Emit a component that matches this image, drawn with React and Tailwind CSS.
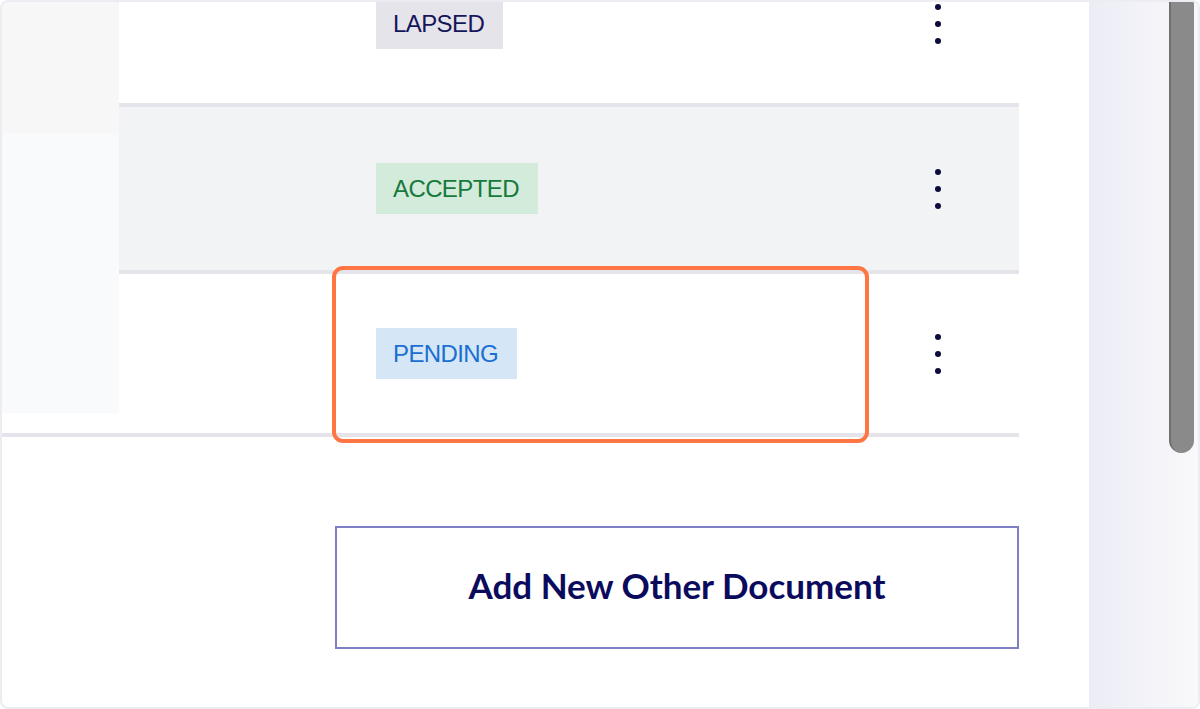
const rows = [
  { label: 'LAPSED', badge: 'bg-[#e4e4ea] text-[#15155a]', h: 'h-[163px]' },
  { label: 'ACCEPTED', badge: 'bg-[#d3ebdb] text-[#17793b]', h: 'h-[167px]' },
  { label: 'PENDING', badge: 'bg-[#d5e6f7] text-[#1a6fd2]', h: 'h-[159px]' },
];

const Kebab = () => (
  <div className="flex flex-col items-center gap-[11px]">
    <span className="w-[6px] h-[6px] rounded-full bg-[#0b0b3d]" />
    <span className="w-[6px] h-[6px] rounded-full bg-[#0b0b3d]" />
    <span className="w-[6px] h-[6px] rounded-full bg-[#0b0b3d]" />
  </div>
);

const Row = ({ label, badge, h, shaded, last }) => (
  <div
    className={`${h} flex items-center justify-between pl-[257px] pr-[78px] ${
      shaded ? 'bg-[#f2f3f5]' : 'bg-white'
    } ${last ? '' : 'border-b-4 border-[#e4e4ea]'}`}
  >
    <span
      className={`h-[51px] pl-[17px] pr-[19px] flex items-center text-[24px] tracking-[-0.6px] font-['Liberation_Sans',sans-serif] ${badge}`}
    >
      {label}
    </span>
    <Kebab />
  </div>
);

const App = () => {
  return (
    <div className="w-[1200px] h-[709px] bg-white overflow-hidden">
      <div className="relative w-full h-full border-2 border-[#ececf2] rounded-[8px] overflow-hidden flex">
        {/* Table + action */}
        <div className="flex-1 flex flex-col">
          <div className="w-[1017px] flex flex-col">
            <div className="flex">
              {/* sticky first column */}
              <div className="w-[117px] flex flex-col">
                <div className="h-[131px] bg-[#f7f7f8]" />
                <div className="h-[280px] bg-[#f9fafb]" />
                <div className="flex-1 bg-white" />
              </div>
              <div className="flex-1 flex flex-col -mt-[58px]">
                {rows.map((r, i) => (
                  <Row key={r.label} {...r} shaded={i === 1} last={i === rows.length - 1} />
                ))}
              </div>
            </div>
            <div className="h-[4px] bg-[#e4e4ea]" />
          </div>

          <div className="w-[1017px] flex justify-end mt-[89px]">
            <button className="w-[684px] h-[123px] pb-[4px] border-2 border-[#7f7fc4] bg-white text-[#0b0b5e] font-['Lato',sans-serif] font-bold text-[35px] leading-none">
              Add New Other Document
            </button>
          </div>
        </div>

        {/* Right rail with scrollbar */}
        <div className="w-[109px] bg-gradient-to-r from-[#ececf6] to-[#f9f9fb] flex justify-end pr-[4px]">
          <div className="w-[25px] h-[453px] -mt-[2px] bg-[#8a8a8a] border-l-2 border-[#6f6f6f] rounded-b-full" />
        </div>

        {/* highlight annotation */}
        <div className="absolute left-[330px] top-[264px] w-[537px] h-[177px] border-4 border-[#ff7544] rounded-[11px] pointer-events-none" />
      </div>
    </div>
  );
};

export default App;
